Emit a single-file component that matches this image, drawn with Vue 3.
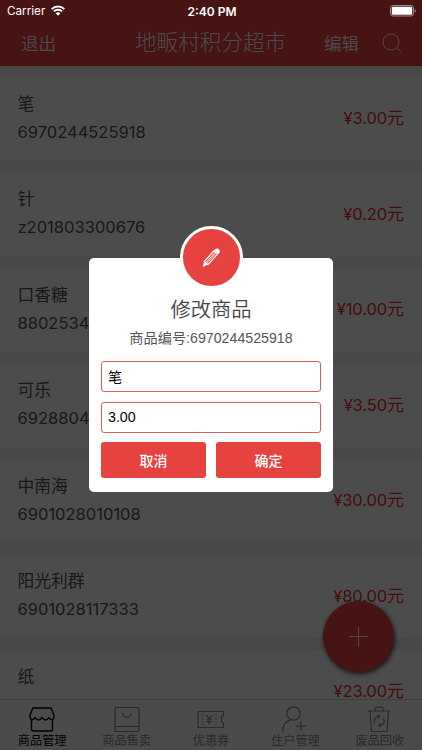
<script setup>
import { ref } from 'vue'

const products = [
  { name: '笔', code: '6970244525918', price: '3.00' },
  { name: '针', code: 'z201803300676', price: '0.20' },
  { name: '口香糖', code: '8802534110266', price: '10.00' },
  { name: '可乐', code: '6928804011142', price: '3.50' },
  { name: '中南海', code: '6901028010108', price: '30.00' },
  { name: '阳光利群', code: '6901028117333', price: '80.00' },
  { name: '纸', code: '6922266446276', price: '23.00' }
]
const tabs = [
  { id: 'shop', label: '商品管理' },
  { id: 'bag', label: '商品售卖' },
  { id: 'ticket', label: '优惠券' },
  { id: 'user', label: '住户管理' },
  { id: 'bin', label: '废品回收' }
]
const name = ref('笔')
const price = ref('3.00')
</script>

<template>
  <div class="screen">
    <header class="nav">
      <span class="exit">退出</span>
      <h1 class="title">地畈村积分超市</h1>
      <span class="edit">编辑</span>
      <svg class="search" viewBox="0 0 20 20"><circle cx="9" cy="9" r="8" /><path d="M14.7 14.7 19 18.7" /></svg>
    </header>

    <main class="list">
      <section v-for="p in products" :key="p.code" class="row">
        <div class="info">
          <div class="name">{{ p.name }}</div>
          <div class="code">{{ p.code }}</div>
        </div>
        <div class="price">¥{{ p.price }}<span class="unit">元</span></div>
      </section>
    </main>

    <nav class="tabs">
      <div v-for="(t, i) in tabs" :key="t.id" class="tab" :class="{ active: i === 0 }">
        <svg class="tab-icon" viewBox="0 0 28 28">
          <g v-if="t.id === 'shop'">
            <path d="M6 3h16q1.200 0 1.600 1l2.300 6q.8 3.300-1.300 4.500-2 .8-3.600-1.800-3.500 4.600-7 0-3.500 4.600-7 0-1.600 2.600-3.600 1.800-2.100-1.200-1.300-4.500l2.300-6q.4-1 1.600-1Z" />
            <path d="M3.500 14.500V24q0 2 2 2h17q2 0 2-2v-9.500" />
          </g>
          <g v-else-if="t.id === 'bag'">
            <rect x="2" y="2.500" width="24" height="24" rx="1" /><path d="M2 21.500h24M9.700 8c.6 5.800 8 5.800 8.600 0" />
          </g>
          <g v-else-if="t.id === 'ticket'">
            <path d="M1 6.500h25.500v4.200l-2 1.300v5l2 1.300v4.200H1Z" />
            <path d="m9.500 10 2.700 4 2.700-4M12.200 14v5.500M9.500 14h5.400M9.500 16.700h5.400" />
            <path d="M5.500 9v11.500M19 9v11.500" stroke-dasharray="1 1.500" />
          </g>
          <g v-else-if="t.id === 'user'">
            <circle cx="12.500" cy="8.500" r="6.700" /><path d="M1.500 26.500c.4-6.500 3.500-10.500 8-11.700M20 16.500v9.500M15.200 21.200h9.500" />
          </g>
          <g v-else>
            <path d="M1.500 6h23.500M9 6l1-3.800h6.500l1 3.800M4 6l1.500 20.500h15.500L22.500 6" />
            <path d="M9 18.500c-2-3.500 0-7.300 4.500-7.300l-1.500-1.700m1.500 1.700-1.700 1.800M17.500 13.200c2 3.500 0 7.300-4.500 7.300l1.500 1.700m-1.500-1.700 1.700-1.800" />
          </g>
        </svg>
        <span class="tab-label">{{ t.label }}</span>
      </div>
    </nav>

    <button class="fab" aria-label="添加">
      <svg viewBox="0 0 20 20"><path d="M9.500 0v20M0 9.500h19" /></svg>
    </button>

    <div class="mask"></div>

    <div class="status">
      <div class="carrier">
        <span>Carrier</span>
        <svg viewBox="0 0 14 11">
          <path d="M.7 4.100a9 9 0 0 1 12.600 0M2.900 6.400a5.900 5.900 0 0 1 8.200 0" />
          <path class="wifi-dot" d="M4.700 8.300a3.300 3.300 0 0 1 4.600 0L7 10.700Z" />
        </svg>
      </div>
      <span class="clock">2:40 PM</span>
      <svg class="battery" viewBox="0 0 27 12">
        <rect class="case" x=".5" y=".5" width="23" height="10.500" rx="2.500" />
        <rect class="charge" x="1.800" y="1.800" width="20.400" height="7.900" rx="1.200" />
        <path class="cap" d="M24.700 4c1.700.5 1.700 3.100 0 3.600Z" />
      </svg>
    </div>

    <div class="dialog">
      <div class="badge">
        <svg viewBox="0 0 20 22">
          <path class="lead" d="m.7 21.300 1.700-6L6 18.400Z" />
          <path class="shaft" d="M2.400 15.300 12.500 3.900l3.900 3.400L6.200 18.600Z" />
          <path class="groove" d="m4.200 16.200 9.600-10.700M5 17l9.700-10.700" />
          <path class="lead" d="M13.700 2.500c2.500-2.800 7 .9 4.300 4l-.8.8-4.300-3.800Z" />
        </svg>
      </div>
      <h2 class="dialog-title">修改商品</h2>
      <p class="dialog-sub">商品编号:6970244525918</p>
      <input v-model="name" class="field" />
      <input v-model="price" class="field" />
      <div class="actions">
        <button class="action">取消</button>
        <button class="action">确定</button>
      </div>
    </div>
  </div>
</template>

<style>
body { margin: 0; overflow: hidden; }
</style>

<style scoped>
* { box-sizing: border-box; }
.screen {
  position: relative;
  width: 422px;
  height: 750px;
  overflow: hidden;
  display: flex;
  flex-direction: column;
  background: #f0f0f2;
  font-family: Inter, "Noto Sans CJK SC", sans-serif;
}
svg { display: block; fill: none; overflow: visible; }
.nav {
  flex: none;
  height: 66px;
  padding: 20px 20px 0 21px;
  display: grid;
  grid-template-columns: 114px 189px 58px 20px;
  align-items: center;
  background: #e64340;
  color: #fff;
}
.exit, .edit { font-size: 17.500px; line-height: 24px; font-weight: 350; }
.exit { padding-top: 1px; }
.title { margin: -2px 0 0; font-size: 21.600px; line-height: 28px; font-weight: 300; white-space: nowrap; }
.edit { padding-top: 2px; white-space: nowrap; }
.search { width: 20px; height: 20px; stroke: #fff; stroke-width: 1; }
.list {
  flex: 1;
  min-height: 0;
  overflow: hidden;
  padding-top: 11px;
  display: flex;
  flex-direction: column;
  gap: 12.500px;
}
.row {
  flex: none;
  height: 83px;
  padding: 0 18px 0 17.500px;
  display: flex;
  justify-content: space-between;
  align-items: center;
  background: #fff;
}
.info { padding-bottom: 1px; }
.name { font-size: 16.800px; line-height: 28px; color: #4c4f58; }
.code { font-size: 16.500px; line-height: 29px; letter-spacing: .01px; color: #4c4f58; }
.price { padding-bottom: 4px; font-size: 16.500px; letter-spacing: -.1px; color: #e62832; }
.unit { font-size: 17px; letter-spacing: 0; }
.tabs {
  flex: none;
  height: 51px;
  display: grid;
  grid-template-columns: repeat(5, 1fr);
  background: #fafafa;
  border-top: 1px solid #cacaca;
}
.tab {
  display: flex;
  flex-direction: column;
  align-items: center;
  padding-top: 5px;
  color: #888;
}
.tab.active { color: #000; }
.tab-icon { width: 28px; height: 28px; stroke: currentColor; stroke-width: 1.200; }
.active .tab-icon { stroke-width: 1.400; }
.tab-label { font-size: 12.200px; line-height: 16px; white-space: nowrap; }
.fab {
  position: absolute;
  left: 323px;
  top: 601px;
  width: 71px;
  height: 71px;
  border: 0;
  border-radius: 50%;
  background: #e64340;
  box-shadow: 1px 2px 5px rgba(0, 0, 0, .75);
  display: grid;
  place-items: center;
  padding: 0;
}
.fab svg { width: 20px; height: 20px; stroke: #fff; stroke-width: 1; }
.mask { position: absolute; inset: 0; background: rgba(0, 0, 0, .7); }
.status {
  position: absolute;
  inset: 0 0 auto;
  height: 22px;
  padding: 0 5px 0 7px;
  display: grid;
  grid-template-columns: 1fr auto 1fr;
  align-items: center;
  color: #fff;
  font-size: 11.700px;
}
.carrier { display: flex; align-items: center; gap: 6px; }
.carrier svg { width: 14px; height: 11px; margin-top: -1px; stroke: #fff; stroke-width: 2; }
.clock { font-weight: 600; font-size: 12px; }
.carrier .wifi-dot { fill: #fff; stroke: none; }
.battery { width: 27px; height: 12px; justify-self: end; margin-top: -1px; }
.case { stroke: #a28989; }
.charge { fill: #fff; }
.cap { fill: #a28989; }
.dialog {
  position: absolute;
  left: 89px;
  top: 258px;
  width: 244px;
  height: 234px;
  padding: 38px 12px 0;
  background: #fff;
  border-radius: 5px;
  display: flex;
  flex-direction: column;
}
.badge {
  position: absolute;
  left: 90.500px;
  top: -32px;
  width: 63px;
  height: 63px;
  border: 3px solid #fff;
  border-radius: 50%;
  background: #e64340;
  display: grid;
  place-items: center;
}
.badge svg { width: 19px; height: 21px; }
.lead { fill: #fff; }
.shaft { stroke: #fff; stroke-width: 1.300; }
.groove { stroke: #fff; stroke-width: .9; }
.dialog-title {
  margin: 0;
  text-align: center;
  font-size: 20.300px;
  line-height: 28px;
  font-weight: 350;
  color: #444;
}
.dialog-sub {
  margin: 4px 0 13px;
  text-align: center;
  font-family: "Liberation Sans", "Noto Sans CJK SC", sans-serif;
  font-size: 14.200px;
  line-height: 20px;
  color: #555;
}
.field {
  flex: none;
  width: 220px;
  height: 31px;
  margin: 0 0 9.500px;
  padding: 0 6px 1px;
  border: 1px solid #dc5f5f;
  border-radius: 3px;
  background: #fff;
  outline: none;
  font-family: "Liberation Sans", "Noto Sans CJK SC", sans-serif;
  font-size: 14.200px;
  color: #000;
}
.actions { display: grid; grid-template-columns: 1fr 1fr; gap: 10px; }
.action {
  height: 36px;
  padding: 0 0 1px;
  border: 0;
  border-radius: 3px;
  background: #e64340;
  color: #fff;
  font-family: "Noto Sans CJK SC", sans-serif;
  font-size: 14px;
  font-weight: 500;
}
</style>
